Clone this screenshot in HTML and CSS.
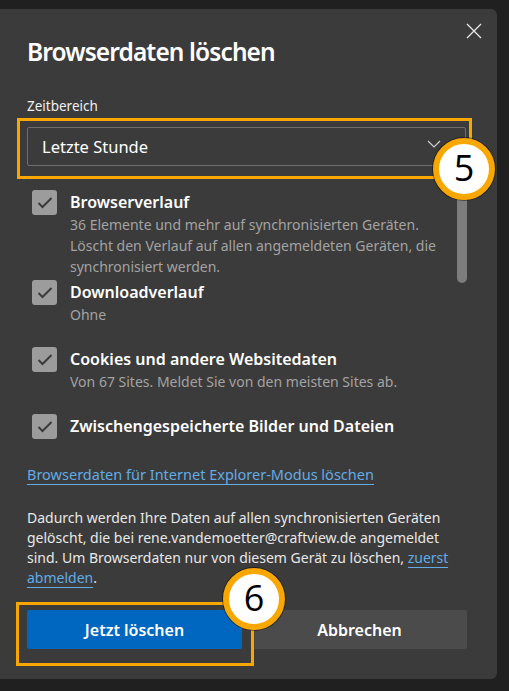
FILE: index.html
```html
<!DOCTYPE html>
<html lang="de">
<head>
    <meta charset="UTF-8">
    <meta name="viewport" content="width=device-width, initial-scale=1.0">
    <title>Browserdaten löschen</title>
    <link rel="stylesheet" href="styles.css">
</head>
<body>
    <div class="dialog">
        <button class="close-btn" aria-label="Schließen">
            <svg width="16" height="16" viewBox="0 0 16 16"><path d="M1 1 L15 15 M15 1 L1 15" stroke="#e8e8e8" stroke-width="1.3" fill="none"/></svg>
        </button>
        <h1 class="title">Browserdaten löschen</h1>

        <label class="field-label" for="range">Zeitbereich</label>
        <div class="select-wrap">
            <div class="select" id="range">
                <span>Letzte Stunde</span>
                <svg class="chevron" width="14" height="8" viewBox="0 0 14 8"><path d="M1 1 L7 7 L13 1" stroke="#cfcfcf" stroke-width="1.2" fill="none"/></svg>
            </div>
            <div class="mark mark-select"></div>
            <div class="badge badge-5">5</div>
        </div>

        <div class="options">
            <ul class="option-list">
                <li class="option">
                    <span class="checkbox"><svg width="16" height="12" viewBox="0 0 16 12"><path d="M1.5 6 L5.5 10 L14.5 1" stroke="#3b3b3b" stroke-width="2" fill="none"/></svg></span>
                    <div class="option-text">
                        <div class="option-title">Browserverlauf</div>
                        <div class="option-desc">36 Elemente und mehr auf synchronisierten Geräten. Löscht den Verlauf auf allen angemeldeten Geräten, die synchronisiert werden.</div>
                    </div>
                </li>
                <li class="option">
                    <span class="checkbox"><svg width="16" height="12" viewBox="0 0 16 12"><path d="M1.5 6 L5.5 10 L14.5 1" stroke="#3b3b3b" stroke-width="2" fill="none"/></svg></span>
                    <div class="option-text">
                        <div class="option-title">Downloadverlauf</div>
                        <div class="option-desc">Ohne</div>
                    </div>
                </li>
                <li class="option">
                    <span class="checkbox"><svg width="16" height="12" viewBox="0 0 16 12"><path d="M1.5 6 L5.5 10 L14.5 1" stroke="#3b3b3b" stroke-width="2" fill="none"/></svg></span>
                    <div class="option-text">
                        <div class="option-title">Cookies und andere Websitedaten</div>
                        <div class="option-desc">Von 67 Sites. Meldet Sie von den meisten Sites ab.</div>
                    </div>
                </li>
                <li class="option">
                    <span class="checkbox"><svg width="16" height="12" viewBox="0 0 16 12"><path d="M1.5 6 L5.5 10 L14.5 1" stroke="#3b3b3b" stroke-width="2" fill="none"/></svg></span>
                    <div class="option-text">
                        <div class="option-title">Zwischengespeicherte Bilder und Dateien</div>
                    </div>
                </li>
            </ul>
            <div class="scrollbar"><div class="thumb"></div></div>
        </div>

        <a class="ie-link" href="#">Browserdaten für Internet Explorer-Modus löschen</a>

        <p class="notice">Dadurch werden Ihre Daten auf allen synchronisierten Geräten gelöscht, die bei rene.vandemoetter@craftview.de angemeldet sind. Um Browserdaten nur von diesem Gerät zu löschen, <a href="#">zuerst abmelden</a>.</p>

        <div class="actions">
            <button class="btn btn-primary">Jetzt löschen</button>
            <button class="btn btn-secondary">Abbrechen</button>
            <div class="mark mark-btn"></div>
            <div class="badge badge-6">6</div>
        </div>
    </div>
</body>
</html>
```

FILE: styles.css
```css
body {
    margin: 0;
    background-color: #202020;
    font-family: "Noto Sans", "Open Sans", sans-serif;
    color: #fff;
}

.dialog {
    position: relative;
    box-sizing: border-box;
    width: 497px;
    height: 670px;
    margin-top: 9px;
    padding: 24px 30px 0 27px;
    background-color: #3b3b3b;
    border-radius: 0 6px 6px 0;
}

.close-btn {
    position: absolute;
    top: 14px;
    right: 15px;
    width: 16px;
    height: 16px;
    padding: 0;
    border: none;
    background: none;
}

.title {
    margin: 0;
    font-size: 24.5px;
    font-weight: 600;
    letter-spacing: -0.9px;
    line-height: 38px;
}

.field-label {
    display: block;
    margin-top: 26px;
    font-size: 13.5px;
    line-height: 18px;
    color: #f0f0f0;
}

.select-wrap {
    position: relative;
    margin-top: 12px;
}

.select {
    display: flex;
    align-items: center;
    justify-content: space-between;
    height: 39px;
    width: 439px;
    box-sizing: border-box;
    padding: 0 24px 0 14px;
    border: 1px solid #6e6e6e;
    border-radius: 2px;
    font-size: 16.5px;
}

.chevron {
    margin-top: -6px;
}

.mark {
    position: absolute;
    border: 3px solid #f7a700;
}

.mark-select {
    top: -9px;
    left: -10px;
    width: 449px;
    height: 55px;
}

.badge {
    position: absolute;
    box-sizing: border-box;
    width: 62px;
    height: 62px;
    border-radius: 50%;
    background-color: #fff;
    border: 6px solid #f7a700;
    box-shadow: 0 0 0 1px rgba(0, 0, 0, 0.45);
    color: #000;
    font-size: 36px;
    line-height: 48px;
    text-align: center;
    font-family: "Open Sans", sans-serif;
}

.badge-5 {
    top: 11px;
    left: 406px;
}

.options {
    display: flex;
    height: 262px;
    margin-top: 22px;
    overflow: hidden;
}

.option-list {
    list-style: none;
    margin: 0;
    padding: 2px 0 0 5px;
    flex: 1;
}

.option {
    display: flex;
    gap: 13px;
    min-height: 64px;
    margin-bottom: 3px;
}

.checkbox {
    flex: none;
    display: flex;
    align-items: center;
    justify-content: center;
    width: 25px;
    height: 25px;
    border-radius: 3px;
    background-color: #9c9c9c;
}

.option-title {
    font-size: 16px;
    font-weight: 600;
    line-height: 24px;
}

.option-desc {
    font-size: 14px;
    line-height: 21px;
    color: #a3a3a3;
}

.scrollbar {
    width: 10px;
}

.thumb {
    height: 95px;
    border-radius: 5px;
    background-color: #7d7d7d;
}

.ie-link {
    display: inline-block;
    margin-top: 15px;
    font-size: 14.5px;
    color: #62abe6;
    text-decoration: none;
    border-bottom: 1px solid #62abe6;
    line-height: 19px;
}

.notice {
    margin: 23px 0 0;
    font-size: 14px;
    line-height: 20px;
    color: #e8e8e8;
}

.notice a {
    color: #62abe6;
    text-decoration: none;
    border-bottom: 1px solid #62abe6;
}

.actions {
    position: relative;
    display: flex;
    gap: 10px;
    margin-top: 22px;
    width: 440px;
}

.btn {
    flex: 1;
    height: 39px;
    border: none;
    border-radius: 2px;
    font-family: inherit;
    font-size: 16px;
    font-weight: 600;
    color: #fff;
}

.btn-primary {
    background-color: #0067c0;
}

.btn-secondary {
    background-color: #4b4b4b;
}

.mark-btn {
    top: -8px;
    left: -11px;
    width: 232px;
    height: 58px;
}

.badge-6 {
    top: -42px;
    left: 196px;
}
```
